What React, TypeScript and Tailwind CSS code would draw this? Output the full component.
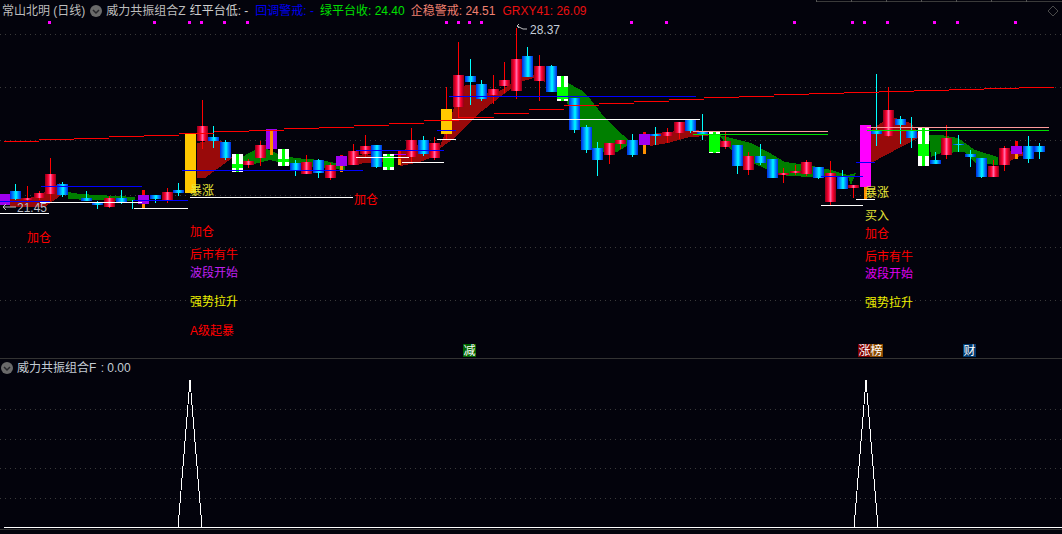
const dots = [49, 154, 189, 201, 224, 247, 446, 458, 469, 481, 631, 666, 794, 852, 864, 887, 934, 957, 1015]

// x, wick top, body top, body bottom, wick bottom
type Candle = [number, number, number, number, number]

const redCandles: Candle[] = [
  [27, 186, 198, 200, 202],
  [39, 191, 193, 198, 200],
  [50, 158, 174, 194, 201],
  [109, 196, 198, 207, 208],
  [167, 188, 192, 201, 203],
  [202, 100, 126, 141, 149],
  [248, 159, 161, 165, 168],
  [260, 141, 145, 158, 166],
  [306, 155, 162, 174, 174],
  [330, 163, 165, 178, 180],
  [353, 144, 151, 165, 165],
  [365, 135, 146, 154, 157],
  [411, 128, 140, 157, 162],
  [434, 137, 143, 158, 160],
  [458, 42, 75, 107, 118],
  [493, 75, 89, 95, 104],
  [504, 62, 80, 86, 93],
  [516, 28, 59, 91, 99],
  [539, 55, 66, 81, 101],
  [609, 143, 143, 155, 164],
  [620, 140, 140, 144, 149],
  [667, 128, 132, 136, 143],
  [679, 122, 122, 133, 139],
  [725, 132, 141, 147, 149],
  [748, 152, 156, 170, 175],
  [783, 168, 173, 175, 183],
  [795, 165, 171, 173, 175],
  [806, 160, 162, 174, 176],
  [830, 161, 173, 202, 205],
  [853, 185, 185, 188, 198],
  [888, 87, 110, 136, 137],
  [946, 125, 138, 155, 159],
  [993, 160, 166, 177, 177],
  [1004, 146, 148, 165, 171],
]

const cyanCandles: Candle[] = [
  [15, 184, 191, 199, 200],
  [62, 182, 184, 195, 197],
  [86, 191, 198, 201, 201],
  [97, 201, 203, 205, 209],
  [121, 190, 198, 202, 204],
  [132, 200, 202, 203, 209],
  [155, 195, 195, 199, 203],
  [178, 183, 190, 193, 196],
  [213, 126, 137, 141, 148],
  [225, 140, 142, 158, 160],
  [295, 160, 163, 171, 176],
  [318, 159, 160, 173, 178],
  [376, 145, 145, 167, 168],
  [423, 136, 140, 154, 156],
  [470, 59, 76, 82, 105],
  [481, 80, 84, 99, 101],
  [527, 47, 56, 77, 77],
  [551, 65, 66, 92, 92],
  [574, 98, 98, 130, 133],
  [586, 125, 127, 150, 153],
  [597, 142, 148, 160, 176],
  [632, 134, 140, 155, 157],
  [655, 127, 134, 136, 145],
  [690, 120, 120, 131, 133],
  [702, 114, 132, 134, 140],
  [737, 145, 145, 166, 174],
  [760, 144, 156, 163, 165],
  [772, 159, 159, 178, 178],
  [818, 167, 167, 178, 179],
  [842, 170, 176, 189, 189],
  [876, 74, 130, 134, 146],
  [900, 116, 119, 125, 144],
  [911, 117, 131, 138, 148],
  [935, 152, 160, 164, 164],
  [958, 135, 144, 145, 152],
  [970, 150, 154, 157, 167],
  [981, 158, 158, 177, 178],
  [1028, 136, 146, 159, 163],
  [1039, 143, 146, 152, 159],
]

// left, top, bottom, solid green top, solid green bottom
const greenBars = [
  [232, 154, 172, 164, 168],
  [278, 149, 166, 159, 162],
  [383, 154, 170, 156, 167],
  [557, 76, 101, 87, 99],
  [709, 132, 153, 134, 152],
  [918, 128, 166, 144, 156],
]

// left, top, bottom, red stub height, orange top, orange bottom
const purpleBars = [
  [0, 194, 205, 0, 205, 205],
  [138, 195, 204, 5, 204, 208],
  [266, 129, 149, 0, 130, 155],
  [336, 156, 166, 1, 166, 172],
  [639, 134, 145, 2, 145, 154],
  [1011, 146, 154, 5, 154, 159],
]

const redBands = [
  '10,198 30,198 50,190 60,183 60,196 45,207 10,207',
  '197,143 213,140 225,142 232,158 205,178 197,178',
  '352,157 364,154 392,158 392,162 352,164',
  '400,152 415,145 440,148 440,154 420,162 400,166',
  '439,149 454,108 465,85 475,85 490,95 505,88 520,78 545,72 545,82 534,78 520,82 500,97 477,115 452,140',
  '650,134 670,132 690,128 708,133 708,136 690,137 668,143 650,146',
  '871,130 881,123 895,118 911,123 918,133 918,138 871,163',
  '1004,150 1020,152 1034,152 1034,155 1020,156 1004,164',
]

const greenBands = [
  '68,192 80,194 135,197 135,201 90,200 68,199',
  '236,160 255,150 265,148 280,155 295,158 320,160 345,165 345,170 320,168 295,166 270,160 250,165',
  '568,83 581,90 591,100 601,113 614,127 632,143 617,152 594,152 574,115 567,103',
  '719,135 751,143 768,152 785,162 808,165 831,170 848,175 856,173 851,185 848,177 808,177 778,175 741,157 731,150',
  '929,135 941,135 958,138 975,150 998,157 998,165 975,163 965,152 941,153 931,157',
]

// colour, x1, x2, y
const levels: [string, number, number, number][] = [
  ['#0000ff', 0, 50, 201],
  ['#0000ff', 41, 142, 186],
  ['#0000ff', 133, 188, 200],
  ['#0000ff', 182, 363, 170],
  ['#0000ff', 356, 444, 150],
  ['#0000ff', 437, 456, 130],
  ['#0000ff', 449, 696, 96],
  ['#0000ff', 821, 863, 176],
  ['#0000ff', 856, 875, 162],
  ['#ffffff', 0, 49, 213],
  ['#ffffff', 40, 142, 202],
  ['#ffffff', 134, 188, 208],
  ['#ffffff', 190, 353, 197],
  ['#ffffff', 356, 409, 157],
  ['#ffffff', 402, 444, 162],
  ['#ffffff', 437, 456, 139],
  ['#ffffff', 452, 700, 119],
  ['#ffffff', 821, 863, 205],
  ['#ffffff', 856, 875, 199],
  ['#ff9c9c', 693, 828, 131],
  ['#00e000', 693, 828, 134],
  ['#ff9c9c', 867, 1049, 127],
  ['#00e000', 867, 1049, 130],
  ['#b000ff', 394, 406, 154],
]

const labels = [
  { text: '加仓', x: 27, y: 238, color: 'text-[#ff0000]' },
  { text: '暴涨', x: 190, y: 191, color: 'text-[#e8e838]' },
  { text: '加仓', x: 190, y: 232, color: 'text-[#ff0000]' },
  { text: '后市有牛', x: 190, y: 255, color: 'text-[#ff0000]' },
  { text: '波段开始', x: 190, y: 273, color: 'text-[#c020f0]' },
  { text: '强势拉升', x: 190, y: 302, color: 'text-[#f0f000]' },
  { text: 'A级起暴', x: 190, y: 331, color: 'text-[#ff0000]' },
  { text: '加仓', x: 354, y: 200, color: 'text-[#ff0000]' },
  { text: '暴涨', x: 865, y: 193, color: 'text-[#e8e838]' },
  { text: '买入', x: 865, y: 216, color: 'text-[#e8e838]' },
  { text: '加仓', x: 865, y: 234, color: 'text-[#ff0000]' },
  { text: '后市有牛', x: 865, y: 257, color: 'text-[#ff0000]' },
  { text: '波段开始', x: 865, y: 274, color: 'text-[#e000f0]' },
  { text: '强势拉升', x: 865, y: 303, color: 'text-[#f0f000]' },
]

const tags = [
  { text: '减', x: 463, color: 'bg-[#006400]' },
  { text: '涨', x: 858, color: 'bg-[#800000]' },
  { text: '榜', x: 870, color: 'bg-[#8a4a00]' },
  { text: '财', x: 963, color: 'bg-[#003a70]' },
]

// the trend line only moves in whole pixels, every 35px or so
function trendSteps() {
  const knots = [[4, 141], [354, 125], [454, 118], [567, 105], [697, 97], [881, 91], [1038, 86]]
  const steps: { x: number; y: number }[] = []
  for (let x = 4; x < 1038; x += 35) {
    const i = Math.max(knots.findIndex((k) => k[0] >= x), 1)
    const [x0, y0] = knots[i - 1]
    const [x1, y1] = knots[i]
    steps.push({ x, y: Math.round(y0 + ((y1 - y0) * (x - x0)) / (x1 - x0)) })
  }
  return steps
}

function peak(x: number) {
  return `${x - 12},169.5 ${x},22 ${x + 12},169.5`
}

function Chevron() {
  return (
    <svg width="12" height="12" viewBox="0 0 12 12" className="shrink-0">
      <circle cx="6" cy="6" r="6" fill="#6a6a6a" />
      <path d="M3 5l3 3 3-3" fill="none" stroke="#26262a" strokeWidth="1.5" />
    </svg>
  )
}

function Bodies({ list, fill, wick }: { list: Candle[]; fill: string; wick: string }) {
  return (
    <>
      {list.map(([x, wt, bt, bb, wb]) => (
        <g key={x}>
          <rect x={x} y={wt} width="1" height={wb - wt} fill={wick} />
          <rect x={x - 5} y={bt} width="11" height={Math.max(bb - bt, 1)} fill={fill} />
        </g>
      ))}
    </>
  )
}

function MainChart() {
  return (
    <svg width="1062" height="358" className="absolute left-0 top-0" shapeRendering="crispEdges">
      <defs>
        <linearGradient id="redBody">
          <stop offset="0" stopColor="#8c0018" />
          <stop offset="0.3" stopColor="#ff0030" />
          <stop offset="0.5" stopColor="#ff6aa8" />
          <stop offset="0.7" stopColor="#ff0030" />
          <stop offset="1" stopColor="#8c0018" />
        </linearGradient>
        <linearGradient id="cyanBody">
          <stop offset="0" stopColor="#0028e0" />
          <stop offset="0.3" stopColor="#0090ff" />
          <stop offset="0.55" stopColor="#00ffff" />
          <stop offset="0.75" stopColor="#0090ff" />
          <stop offset="1" stopColor="#0028e0" />
        </linearGradient>
      </defs>

      <rect x="816" y="1" width="246" height="1" fill="#3a3a3a" />
      {[816, 851, 886, 921, 956, 991, 1026].map((x) => (
        <rect key={x} x={x} y="0" width="1" height="2" fill="#555" />
      ))}
      <path d="M1053 6l5 5-5 5-5-5z" fill="none" stroke="#4a4a4a" shapeRendering="auto" />

      {[34, 87, 140, 195, 247, 300].map((y) => (
        <line key={y} x1="0" x2="1062" y1={y + 0.5} y2={y + 0.5} stroke="#3a3a3a" strokeDasharray="1 4" />
      ))}

      {dots.map((x) => (
        <rect key={x} x={x - 1} y="21" width="3" height="3" fill="#ff00ff" />
      ))}

      {redBands.map((p) => (
        <polygon key={p} points={p} fill="#990a0a" />
      ))}
      {greenBands.map((p) => (
        <polygon key={p} points={p} fill="#007f00" />
      ))}

      <Bodies list={redCandles} fill="url(#redBody)" wick="#ff0000" />
      <Bodies list={cyanCandles} fill="url(#cyanBody)" wick="#00ffff" />

      {/* limit bars */}
      <rect x="185" y="133" width="11" height="60" fill="#ffc800" />
      <rect x="441" y="109" width="11" height="25" fill="#ffc800" />
      <rect x="446" y="87" width="1" height="22" fill="#ff0000" />
      <rect x="446" y="134" width="1" height="5" fill="#ff0000" />
      <rect x="860" y="125" width="11" height="62" fill="#ff00ff" />
      <rect x="864" y="187" width="3" height="12" fill="#ff9000" />
      <rect x="398" y="150" width="3" height="9" fill="#ff0000" />
      <rect x="398" y="159" width="3" height="6" fill="#ff9000" />

      {greenBars.map(([x, t, b, gt, gb]) => (
        <g key={x}>
          <rect x={x} y={t} width="11" height={b - t} fill="#ffffff" />
          <rect x={x + 4} y={t} width="3" height={b - t} fill="#00ff00" />
          <rect x={x} y={gt} width="11" height={gb - gt} fill="#00ff00" />
        </g>
      ))}

      {purpleBars.map(([x, t, b, stub, ot, ob]) => (
        <g key={x}>
          <rect x={x + 4} y={t - stub} width="3" height={stub} fill="#ff0000" />
          <rect x={x} y={t} width={x === 0 ? 10 : 11} height={b - t} fill="#a000f0" />
          <rect x={x + 4} y={ot} width="3" height={ob - ot} fill="#ff9000" />
        </g>
      ))}

      {trendSteps().map((s) => (
        <rect key={s.x} x={s.x} y={s.y} width="35" height="1" fill="#ff0000" />
      ))}

      {levels.map(([color, x1, x2, y]) => (
        <rect key={`${x1}-${y}`} x={x1} y={y} width={x2 - x1} height="1" fill={color} />
      ))}

      {/* high / low pointers */}
      <path d="M517 26l6 3 4 0M517 26l2 -2M517 26l2 2" fill="none" stroke="#c0c0c0" shapeRendering="auto" />
      <path d="M3 207h13M3 207l3 -3M3 207l3 3" fill="none" stroke="#c0c0c0" shapeRendering="auto" />
    </svg>
  )
}

export default function App() {
  return (
    <div
      className="flex h-[534px] w-[1062px] flex-col overflow-hidden bg-[#03030c] text-xs"
      style={{ fontFamily: '"Liberation Sans", "Noto Sans CJK SC", sans-serif' }}
    >
      <div className="relative h-[358px] shrink-0">
        <MainChart />

        <div className="relative flex h-[22px] items-center whitespace-nowrap pl-[2px] text-[#bdbdbd]">
          <span>常山北明 (日线)</span>
          <span className="ml-[5px]">
            <Chevron />
          </span>
          <span className="ml-[4px]">威力共振组合Z</span>
          <span className="ml-[4px] text-[#cfcfcf]">红平台低: -</span>
          <span className="ml-[7px] text-[#0000f0]">回调警戒: -</span>
          <span className="ml-[6px] text-[#00e000]">绿平台收: 24.40</span>
          <span className="ml-[6px] text-[#f08070]">企稳警戒: 24.51</span>
          <span className="ml-[7px] text-[#e81010]">GRXY41: 26.09</span>
        </div>

        <span className="absolute left-[530px] top-[22px] text-[#c4ccd8]">28.37</span>
        <span className="absolute left-[17px] top-[200px] text-[#b8bcc4]">21.45</span>

        {labels.map((l) => (
          <span
            key={`${l.x}-${l.y}`}
            className={`absolute leading-4 ${l.color}`}
            style={{ left: l.x, top: l.y - 8 }}
          >
            {l.text}
          </span>
        ))}

        {tags.map((t) => (
          <span
            key={t.x}
            className={`absolute top-[344px] flex h-[13px] w-[13px] items-center justify-center text-white ${t.color}`}
            style={{ left: t.x }}
          >
            {t.text}
          </span>
        ))}
      </div>

      <div className="relative h-[172px] shrink-0 border-y border-[#333]">
        <svg width="1062" height="172" className="absolute left-0 top-[-1px]" shapeRendering="crispEdges">
          {[51, 81, 110, 140].map((y) => (
            <line key={y} x1="0" x2="1062" y1={y + 0.5} y2={y + 0.5} stroke="#3a3a3a" strokeDasharray="1 4" />
          ))}
          <rect x="4" y="169" width="1058" height="1" fill="#ffffff" />
          <polyline points={peak(190)} fill="none" stroke="#ffffff" />
          <polyline points={peak(866)} fill="none" stroke="#ffffff" />
        </svg>
        <div className="relative flex h-[17px] items-center gap-[4px] pl-px text-[#c4ccd4]">
          <Chevron />
          <span>
            威力共振组合F <span className="ml-px">: 0.00</span>
          </span>
        </div>
      </div>
    </div>
  )
}
